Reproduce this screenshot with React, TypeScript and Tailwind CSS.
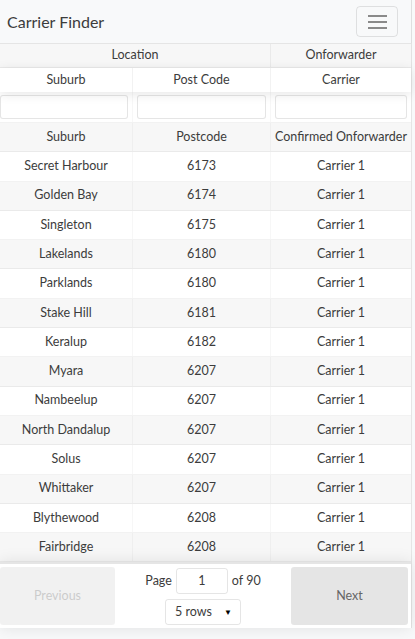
import React from "react"

const rows: [string, string, string][] = [
  ["Secret Harbour", "6173", "Carrier 1"],
  ["Golden Bay", "6174", "Carrier 1"],
  ["Singleton", "6175", "Carrier 1"],
  ["Lakelands", "6180", "Carrier 1"],
  ["Parklands", "6180", "Carrier 1"],
  ["Stake Hill", "6181", "Carrier 1"],
  ["Keralup", "6182", "Carrier 1"],
  ["Myara", "6207", "Carrier 1"],
  ["Nambeelup", "6207", "Carrier 1"],
  ["North Dandalup", "6207", "Carrier 1"],
  ["Solus", "6207", "Carrier 1"],
  ["Whittaker", "6207", "Carrier 1"],
  ["Blythewood", "6208", "Carrier 1"],
  ["Fairbridge", "6208", "Carrier 1"],
]

function Row({ cells, shaded }: { cells: [string, string, string]; shaded: boolean }) {
  return (
    <div
      className={`grid grid-cols-[133px_138px_140px] h-[29.3px] border-b border-black/5 ${
        shaded ? "bg-[#f7f7f7]" : "bg-white"
      }`}
    >
      <div className="flex items-center justify-center border-r border-black/[0.03]">{cells[0]}</div>
      <div className="flex items-center justify-center border-r border-black/[0.03]">{cells[1]}</div>
      <div className="flex items-center justify-center">{cells[2]}</div>
    </div>
  )
}

export default function App() {
  return (
    <div className="w-[415px] h-[639px] overflow-hidden bg-[#f8f9fa] text-[12.5px] text-[#3c3c3c]" style={{ fontFamily: "Lato, 'Open Sans', sans-serif" }}>
      {/* navbar */}
      <div className="w-[412px] h-[44px] border-r border-black/10 border-b border-b-[#e5e5e5] flex items-center justify-between pl-[7px] pr-[13px]">
        <span className="text-[16px] text-[#3c3c3c]">Carrier Finder</span>
        <button className="w-[42px] h-[31px] rounded-[4px] border border-black/10 flex flex-col items-center justify-center gap-[4px]">
          <span className="block w-[19px] h-[2px] bg-[#8a8a8a]" />
          <span className="block w-[19px] h-[2px] bg-[#8a8a8a]" />
          <span className="block w-[19px] h-[2px] bg-[#8a8a8a]" />
        </button>
      </div>

      {/* table */}
      <div className="w-[412px] bg-white border-r border-black/10">
        <div className="grid grid-cols-[271px_140px] h-[24px] bg-[#f7f7f7] border-b border-black/5 shadow-[0_1px_2px_rgba(0,0,0,0.04)]">
          <div className="flex items-center justify-center border-r border-black/5">Location</div>
          <div className="flex items-center justify-center">Onforwarder</div>
        </div>
        <div className="relative grid grid-cols-[133px_138px_140px] h-[24px] bg-white shadow-[0_2px_12px_0_rgba(0,0,0,0.1)]">
          <div className="flex items-center justify-center border-r border-black/5">Suburb</div>
          <div className="flex items-center justify-center border-r border-black/5">Post Code</div>
          <div className="flex items-center justify-center">Carrier</div>
        </div>
        <div className="grid grid-cols-[133px_138px_140px] h-[31px] bg-white border-b border-black/5">
          <div className="flex items-center pr-[4px] border-r border-black/[0.03]">
            <div className="w-full h-[24px] rounded-[3px] border border-black/10 bg-white" />
          </div>
          <div className="flex items-center px-[4px] border-r border-black/[0.03]">
            <div className="w-full h-[24px] rounded-[3px] border border-black/10 bg-white" />
          </div>
          <div className="flex items-center px-[4px]">
            <div className="w-full h-[24px] rounded-[3px] border border-black/10 bg-white" />
          </div>
        </div>
        <Row cells={["Suburb", "Postcode", "Confirmed Onforwarder"]} shaded />
        {rows.map((r, i) => (
          <Row key={r[0]} cells={r} shaded={i % 2 === 1} />
        ))}
        {/* pagination */}
        <div className="relative flex items-stretch justify-between h-[66px] p-[3px] pl-0 bg-white border-t-2 border-black/10 shadow-[0_0_15px_0_rgba(0,0,0,0.1)]">
          <button className="w-[115px] rounded-[3px] bg-black/10 opacity-50 text-[#999] text-[12.5px]">Previous</button>
          <div className="flex flex-col items-center justify-center gap-[5px] pt-[1px]">
            <div className="flex items-center gap-[4px]">
              <span>Page</span>
              <div className="w-[52px] h-[26px] border border-black/10 rounded-[3px] flex items-center justify-center">1</div>
              <span>of 90</span>
            </div>
            <div className="w-[76px] h-[27px] border border-black/10 rounded-[3px] flex items-center justify-between pl-[9px] pr-[8px]">
              <span>5 rows</span>
              <span className="text-[8px] text-black">▼</span>
            </div>
          </div>
          <button className="w-[117px] rounded-[3px] bg-black/10 text-[#666] text-[12.5px]">Next</button>
        </div>
      </div>
    </div>
  )
}
